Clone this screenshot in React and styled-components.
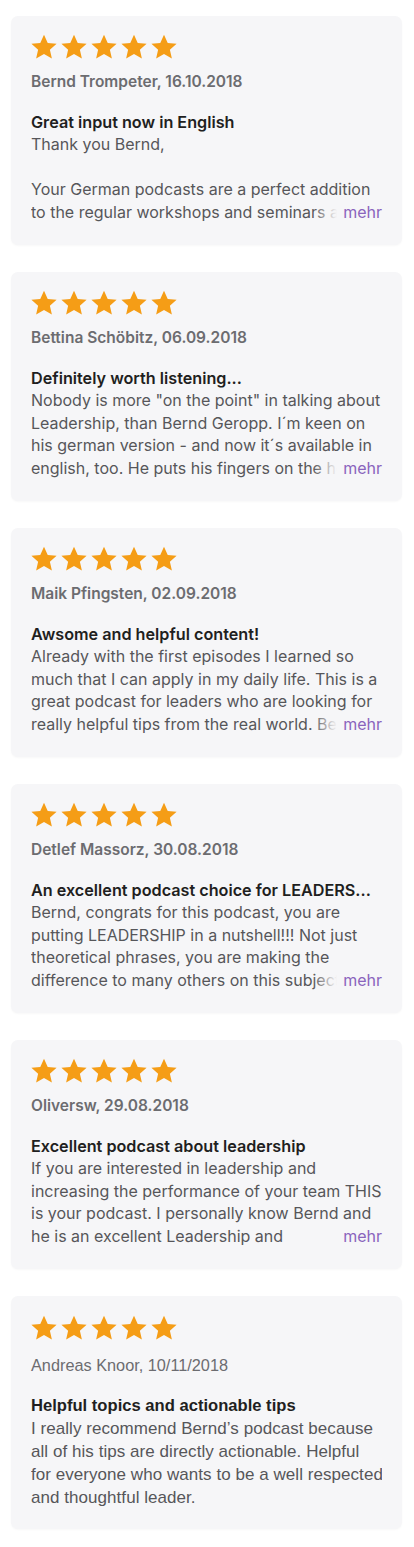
import React from "react";
import styled, { createGlobalStyle } from "styled-components";

const GlobalStyle = createGlobalStyle`
  body {
    margin: 0;
    background: #ffffff;
    font-family: Inter, "Noto Sans", "Liberation Sans", sans-serif;
    -webkit-font-smoothing: antialiased;
  }
`;

const List = styled.div`
  display: flex;
  flex-direction: column;
  gap: 27px;
  padding: 16px 12px 20px 11px;
`;

const legacyFont = `"Liberation Sans", Arial, sans-serif`;

const Card = styled.div`
  position: relative;
  background: #f6f6f8;
  border-radius: 7px;
  padding: ${(p) => (p.$legacy ? "17px 20px 20px 20px" : "16px 20px 22px 20px")};
  box-shadow: 0 1px 2px rgba(0, 0, 0, 0.03);
  ${(p) => p.$legacy && `font-family: ${legacyFont};`}
`;

const Stars = styled.div`
  display: flex;
  gap: 2px;
  height: 30px;
  margin-left: -1px;
`;

const Author = styled.div`
  margin-top: ${(p) => (p.$legacy ? "12px" : "10px")};
  font-size: ${(p) => (p.$legacy ? "16.3px" : "15.5px")};
  line-height: 20px;
  font-weight: ${(p) => (p.$legacy ? 400 : 600)};
  color: #6c6c70;
`;

const Title = styled.div`
  margin-top: ${(p) => (p.$legacy ? "20px" : "19px")};
  font-size: ${(p) => (p.$legacy ? "16.6px" : "16.2px")};
  line-height: 22px;
  font-weight: ${(p) => (p.$legacy ? 700 : 600)};
  color: #1f1f21;
`;

const BodyWrap = styled.div`
  position: relative;
`;

const Body = styled.div`
  font-size: ${(p) => (p.$legacy ? "17px" : "16px")};
  letter-spacing: ${(p) => (p.$legacy ? "0.05px" : "normal")};
  line-height: ${(p) => (p.$legacy ? "23px" : "22.5px")};
  color: #56565a;
  max-height: ${(p) => (p.$clamped ? "90px" : "none")};
  overflow: hidden;
  white-space: ${(p) => (p.$legacy ? "pre" : "pre-line")};
`;

const More = styled.span`
  position: absolute;
  right: 0;
  bottom: 0;
  line-height: 22.5px;
  font-size: 16px;
  color: #8a64bd;
  padding-left: 30px;
  background: linear-gradient(
    to right,
    rgba(246, 246, 248, 0) 0,
    #f6f6f8 24px
  );
`;

const Star = () => (
  <svg width="28" height="30" viewBox="0 0 24 24">
    <path
      fill="#f59d16"
      d="M12 1.5l3.2 7 7.6.75-5.75 5.1 1.7 7.55L12 18l-6.75 3.9 1.7-7.55-5.75-5.1 7.6-.75z"
    />
  </svg>
);

const reviews = [
  {
    author: "Bernd Trompeter, 16.10.2018",
    title: "Great input now in English",
    text:
      "Thank you Bernd,\n\nYour German podcasts are a perfect addition to the regular workshops and seminars and a great help for everyday leadership.",
    more: true,
  },
  {
    author: "Bettina Schöbitz, 06.09.2018",
    title: "Definitely worth listening...",
    text:
      "Nobody is more \"on the point\" in talking about Leadership, than Bernd Geropp. I´m keen on his german version - and now it´s available in english, too. He puts his fingers on the hot spots of leadership.",
    more: true,
  },
  {
    author: "Maik Pfingsten, 02.09.2018",
    title: "Awsome and helpful content!",
    text:
      "Already with the first episodes I learned so much that I can apply in my daily life. This is a great podcast for leaders who are looking for really helpful tips from the real world. Bernd knows what he talks about.",
    more: true,
  },
  {
    author: "Detlef Massorz, 30.08.2018",
    title: "An excellent podcast choice for LEADERS...",
    text:
      "Bernd, congrats for this podcast, you are putting LEADERSHIP in a nutshell!!! Not just theoretical phrases, you are making the difference to many others on this subject with real examples.",
    more: true,
  },
  {
    author: "Oliversw, 29.08.2018",
    title: "Excellent podcast about leadership",
    text:
      "If you are interested in leadership and increasing the performance of your team THIS is your podcast. I personally know Bernd and he is an excellent Leadership and\nmanagement coach.",
    more: true,
  },
  {
    author: "Andreas Knoor, 10/11/2018",
    title: "Helpful topics and actionable tips",
    text:
      "I really recommend Bernd’s podcast because\nall of his tips are directly actionable. Helpful\nfor everyone who wants to be a well respected\nand thoughtful leader.",
    more: false,
    legacy: true,
  },
];

const App = () => (
  <>
    <GlobalStyle />
    <List>
      {reviews.map((r) => (
        <Card key={r.author} $legacy={r.legacy}>
          <Stars>
            {[0, 1, 2, 3, 4].map((i) => (
              <Star key={i} />
            ))}
          </Stars>
          <Author $legacy={r.legacy}>{r.author}</Author>
          <Title $legacy={r.legacy}>{r.title}</Title>
          <BodyWrap>
            <Body $clamped={r.more} $legacy={r.legacy}>
              {r.text}
            </Body>
            {r.more && <More>mehr</More>}
          </BodyWrap>
        </Card>
      ))}
    </List>
  </>
);

export default App;
